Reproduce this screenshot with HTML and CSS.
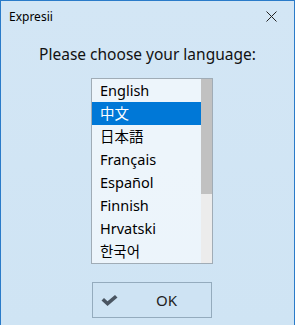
FILE: index.html
```html
<!DOCTYPE html>
<html lang="en">
<head>
    <meta charset="UTF-8">
    <title>Expresii</title>
    <link rel="stylesheet" href="styles.css">
</head>
<body>
    <div class="window">
        <!-- Title bar -->
        <div class="titlebar">
            <span class="title">Expresii</span>
            <span class="close">
                <svg width="11" height="11" viewBox="0 0 11 11">
                    <path d="M0.5 0.5 L10.5 10.5 M10.5 0.5 L0.5 10.5" stroke="#222" stroke-width="1" fill="none"/>
                </svg>
            </span>
        </div>

        <p class="prompt">Please choose your language:</p>

        <!-- Language list -->
        <div class="listbox">
            <ul class="items">
                <li>English</li>
                <li class="selected">中文</li>
                <li>日本語</li>
                <li>Français</li>
                <li>Español</li>
                <li>Finnish</li>
                <li>Hrvatski</li>
                <li>한국어</li>
            </ul>
            <div class="scrollbar">
                <div class="thumb"></div>
            </div>
        </div>

        <button class="ok-button">
            <svg class="check" width="17" height="11" viewBox="0 0 17 11">
                <path d="M0.5 5.5 L3 3 L6.5 6.2 L14 0 L16.5 2.5 L6.5 11 Z" fill="#4a5561"/>
            </svg>
            <span>OK</span>
        </button>
    </div>
</body>
</html>
```

FILE: styles.css
```css
body {
    margin: 0;
    font-family: "Noto Sans", "Noto Sans CJK SC", sans-serif;
}
.window {
    width: 295px;
    height: 325px;
    box-sizing: border-box;
    border: 1px solid #2a7bc9;
    border-bottom: none;
    background: linear-gradient(180deg, #d3e6f5 0%, #cfe4f4 100%);
    overflow: hidden;
}
.titlebar {
    height: 30px;
    display: flex;
    align-items: center;
    justify-content: space-between;
    padding-left: 8px;
}
.title {
    font-size: 12px;
    color: #000;
}
.close {
    width: 46px;
    height: 30px;
    display: flex;
    align-items: center;
    justify-content: center;
}
.prompt {
    margin: 13px 0 0;
    text-align: center;
    font-size: 15.5px;
    line-height: 20px;
    color: #111;
}
.listbox {
    margin: 14px 0 0 90px;
    width: 122px;
    height: 186px;
    box-sizing: border-box;
    border: 1px solid #a0acb6;
    background: rgba(255, 255, 255, 0.6);
    display: flex;
}
.items {
    list-style: none;
    margin: 0;
    padding: 0;
    flex: 1;
}
.items li {
    height: 23px;
    line-height: 23px;
    padding-left: 8px;
    font-size: 14.5px;
    color: #000;
    font-family: "Noto Sans", "Noto Sans CJK JP", "Noto Sans CJK KR", sans-serif;
}
.items li.selected {
    background-color: #0078d7;
    color: #fff;
}
.scrollbar {
    width: 11px;
    background: #ececec;
}
.thumb {
    height: 115px;
    background: #c1c1c1;
}
.ok-button {
    margin: 18px 0 0 91px;
    width: 120px;
    height: 36px;
    box-sizing: border-box;
    border: 1px solid #94abbd;
    background: #cee3f3;
    display: flex;
    align-items: center;
    padding: 0 0 0 8px;
    font-family: "Noto Sans", sans-serif;
    font-size: 15px;
    color: #222;
}
.ok-button span {
    flex: 1;
    text-align: center;
    padding-left: 4px;
}
```
